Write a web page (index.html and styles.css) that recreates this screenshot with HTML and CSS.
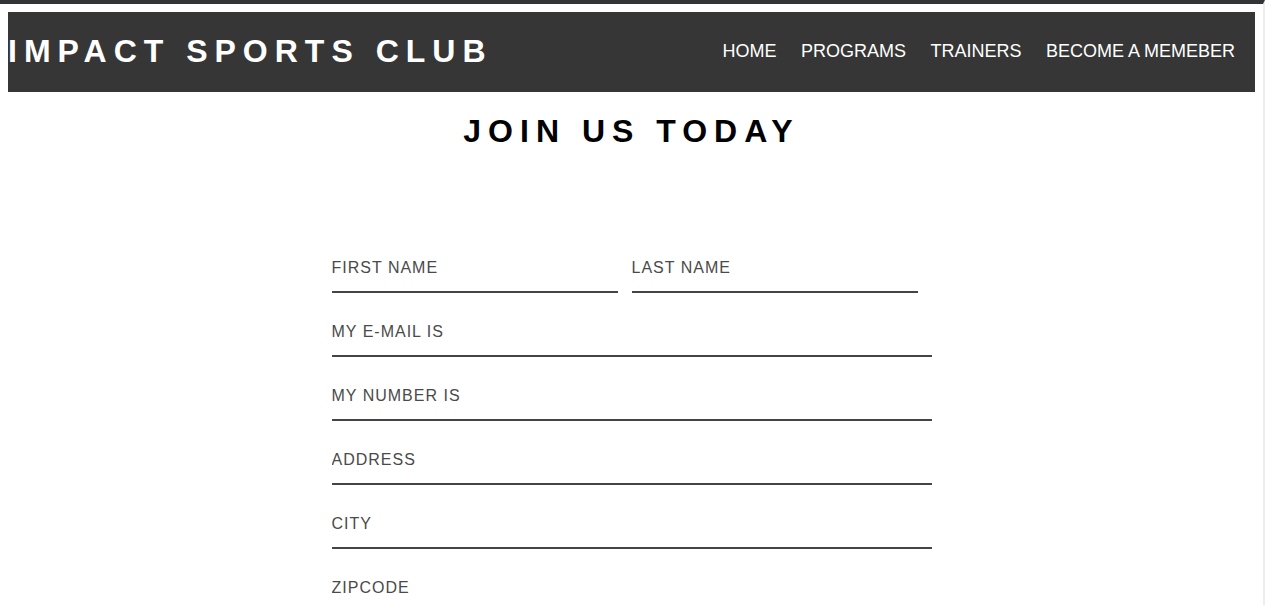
FILE: index.html
```html
<!DOCTYPE html>
<html lang="en">
<head>
<meta charset="utf-8">
<title>Impact Sports Club</title>
<link rel="stylesheet" href="styles.css">
</head>
<body>
<header class="site-header">
  <div class="logo">IMPACT SPORTS CLUB</div>
  <nav class="nav">
    <a href="#" class="nav-link">HOME</a>
    <a href="#" class="nav-link">PROGRAMS</a>
    <a href="#" class="nav-link">TRAINERS</a>
    <a href="#" class="nav-link">BECOME A MEMEBER</a>
  </nav>
</header>
<main class="main">
  <h1 class="page-title">JOIN US TODAY</h1>
  <form class="join-form">
    <div class="row">
      <input class="field half" type="text" placeholder="FIRST NAME">
      <input class="field half" type="text" placeholder="LAST NAME">
    </div>
    <input class="field" type="email" placeholder="MY E-MAIL IS">
    <input class="field" type="tel" placeholder="MY NUMBER IS">
    <input class="field" type="text" placeholder="ADDRESS">
    <input class="field" type="text" placeholder="CITY">
    <input class="field" type="text" placeholder="ZIPCODE">
  </form>
</main>
</body>
</html>
```
FILE: styles.css
```css
html {
  border-top: 4px solid #333436;
  border-right: 2px solid #ededed;
  background: #fff;
}

body {
  margin: 8px;
  font-family: "Liberation Sans", Arial, sans-serif;
  color: #000;
}

.site-header {
  height: 80px;
  background: #363636;
  display: flex;
  align-items: center;
  justify-content: space-between;
  padding: 0 20px 2px 0;
  box-sizing: border-box;
}

.logo {
  color: #fff;
  font-size: 32px;
  font-weight: bold;
  letter-spacing: 7px;
  line-height: 36px;
}

.nav {
  display: flex;
  gap: 24.5px;
}

.nav-link {
  color: #fff;
  text-decoration: none;
  font-size: 18px;
}

.page-title {
  text-align: center;
  font-size: 32px;
  font-weight: bold;
  letter-spacing: 7px;
  line-height: 36px;
  margin: 21px 0;
}

.join-form {
  width: 600px;
  margin: 0 auto;
  padding-top: 59px;
}

.row {
  display: flex;
  gap: 14px;
}

.field {
  display: block;
  box-sizing: border-box;
  width: 100%;
  height: 40px;
  margin: 24px 0 0;
  padding: 0 0 8px;
  border: none;
  border-bottom: 2px solid #444;
  background: transparent;
  font-family: "Liberation Sans", Arial, sans-serif;
  font-size: 16px;
  letter-spacing: 1px;
  color: #444;
  outline: none;
}

.field.half {
  width: 286px;
}

.field::placeholder {
  color: #4a4a4a;
  opacity: 1;
}
```
